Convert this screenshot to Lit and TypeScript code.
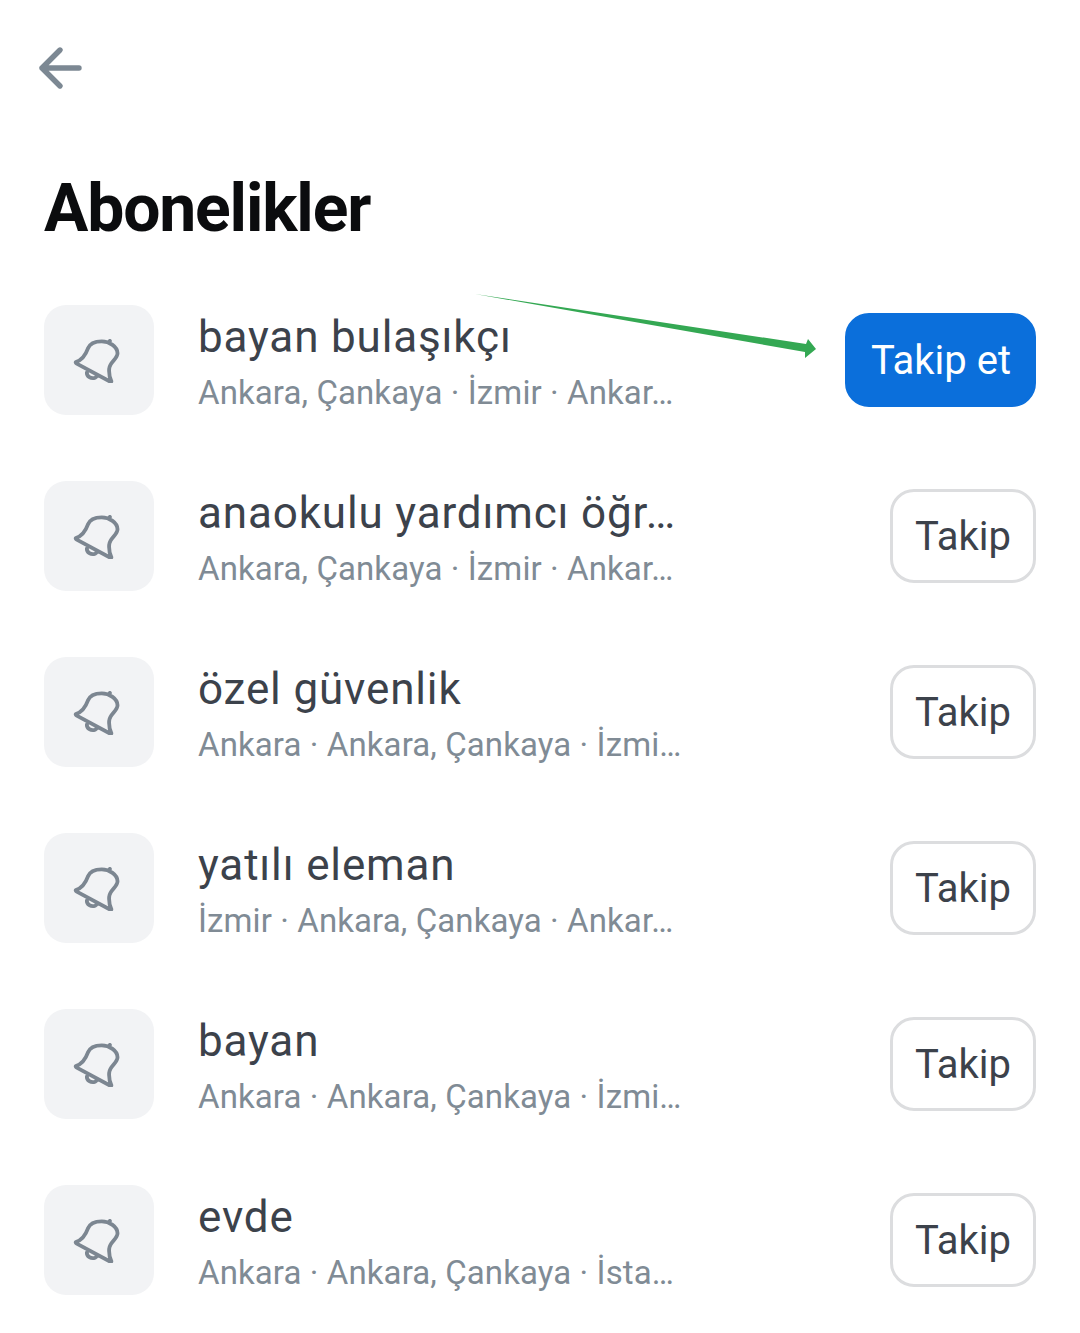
import { LitElement, html, css, svg } from "lit";
import { customElement } from "lit/decorators.js";

const rows = [
  ["bayan bulaşıkçı", "Ankara, Çankaya · İzmir · Ankar…", true],
  ["anaokulu yardımcı öğr…", "Ankara, Çankaya · İzmir · Ankar…", false],
  ["özel güvenlik", "Ankara · Ankara, Çankaya · İzmi…", false],
  ["yatılı eleman", "İzmir · Ankara, Çankaya · Ankar…", false],
  ["bayan", "Ankara · Ankara, Çankaya · İzmi…", false],
  ["evde", "Ankara · Ankara, Çankaya · İsta…", false],
] as [string, string, boolean][];

const bell = svg`<path d="M4 24 C10 22 14 17 16.5 10 C18.5 5 24 2.5 31 2.5 C39 2.5 47.5 8 47.5 15 C47.5 21 39.5 24 38.8 31 C38.4 36 39.5 41 41 44 C41.2 44.8 40.5 45 40 44.7 L4.4 25.5 C3.8 25 3.6 24.3 4 24 Z M15.5 35 C15 39 20 42 24 40.5 C25 40 25.5 39.5 26 38.5 M38 3.5 L39.5 2"/>`;

@customElement("app-root")
export class AppRoot extends LitElement {
  static styles = css`
    :host { display: block; position: relative; width: 1080px; height: 1333px; background: #fff; overflow: hidden; font-family: Roboto, "Noto Sans", sans-serif; }
    .top { padding: 46px 0 0 38px; height: 44px; }
    .back { display: block; width: 46px; height: 44px; fill: none; stroke: #7c8893; stroke-width: 5.4; stroke-linecap: round; stroke-linejoin: round; }
    h1 { margin: 79px 0 0 44px; font-size: 66px; line-height: 80px; font-weight: 700; letter-spacing: -1.15px; color: #0b0c0e; }
    .list { margin-top: 56px; padding: 0 44px; display: flex; flex-direction: column; gap: 66px; }
    .row { display: flex; align-items: center; height: 110px; }
    .tile { width: 110px; height: 110px; flex: none; border-radius: 22px; background: #f2f3f5; display: flex; align-items: center; justify-content: center; }
    .bell { width: 48px; height: 44px; margin: 2px 7px 0 0; fill: none; stroke: #7c8691; stroke-width: 4; stroke-linejoin: round; stroke-linecap: round; }
    .text { margin-left: 44px; padding-top: 5px; flex: none; }
    .name, .sub { white-space: nowrap; }
    .name { font-size: 44px; line-height: 52px; color: #3c424b; letter-spacing: 0.85px; }
    .sub { margin-top: 9px; font-size: 33px; line-height: 42px; color: #808b95; letter-spacing: 0.1px; }
    .spacer { flex: 1; }
    .btn { box-sizing: border-box; height: 94px; border-radius: 24px; border: 3px solid #dcdddf; background: #fff; color: #3c424b; font: 400 40px Roboto, sans-serif; padding: 1px 22px 0 23px; display: flex; align-items: center; justify-content: center; }
    .btn.plain { padding-left: 22px; }
    .btn.on { background: #0b6fdb; border-color: #0b6fdb; color: #fff; padding-top: 0; }
    .arrow { position: absolute; left: 0; top: 0; width: 1080px; height: 400px; pointer-events: none; }
    .arrow path { fill: #34a853; }
  `;
  render() {
    return html`
      <div class="top">
        <svg class="back" viewBox="0 0 46 44"><path d="M41 22 H4 M22 4 L4 22 L22 40"/></svg>
      </div>
      <h1>Abonelikler</h1>
      <div class="list">
        ${rows.map(([n, s, on]) => html`
          <div class="row">
            <div class="tile"><svg class="bell" viewBox="0 0 50 46">${bell}</svg></div>
            <div class="text"><div class="name">${n}</div><div class="sub">${s}</div></div>
            <div class="spacer"></div>
            <div class="btn ${on ? "on" : "plain"}">${on ? "Takip et" : "Takip"}</div>
          </div>`)}
      </div>
      <svg class="arrow" viewBox="0 0 1080 400"><path d="M475 294 L806 344 L808 339 L816 349 L805 358 L805 352 Z"/></svg>
    `;
  }
}
